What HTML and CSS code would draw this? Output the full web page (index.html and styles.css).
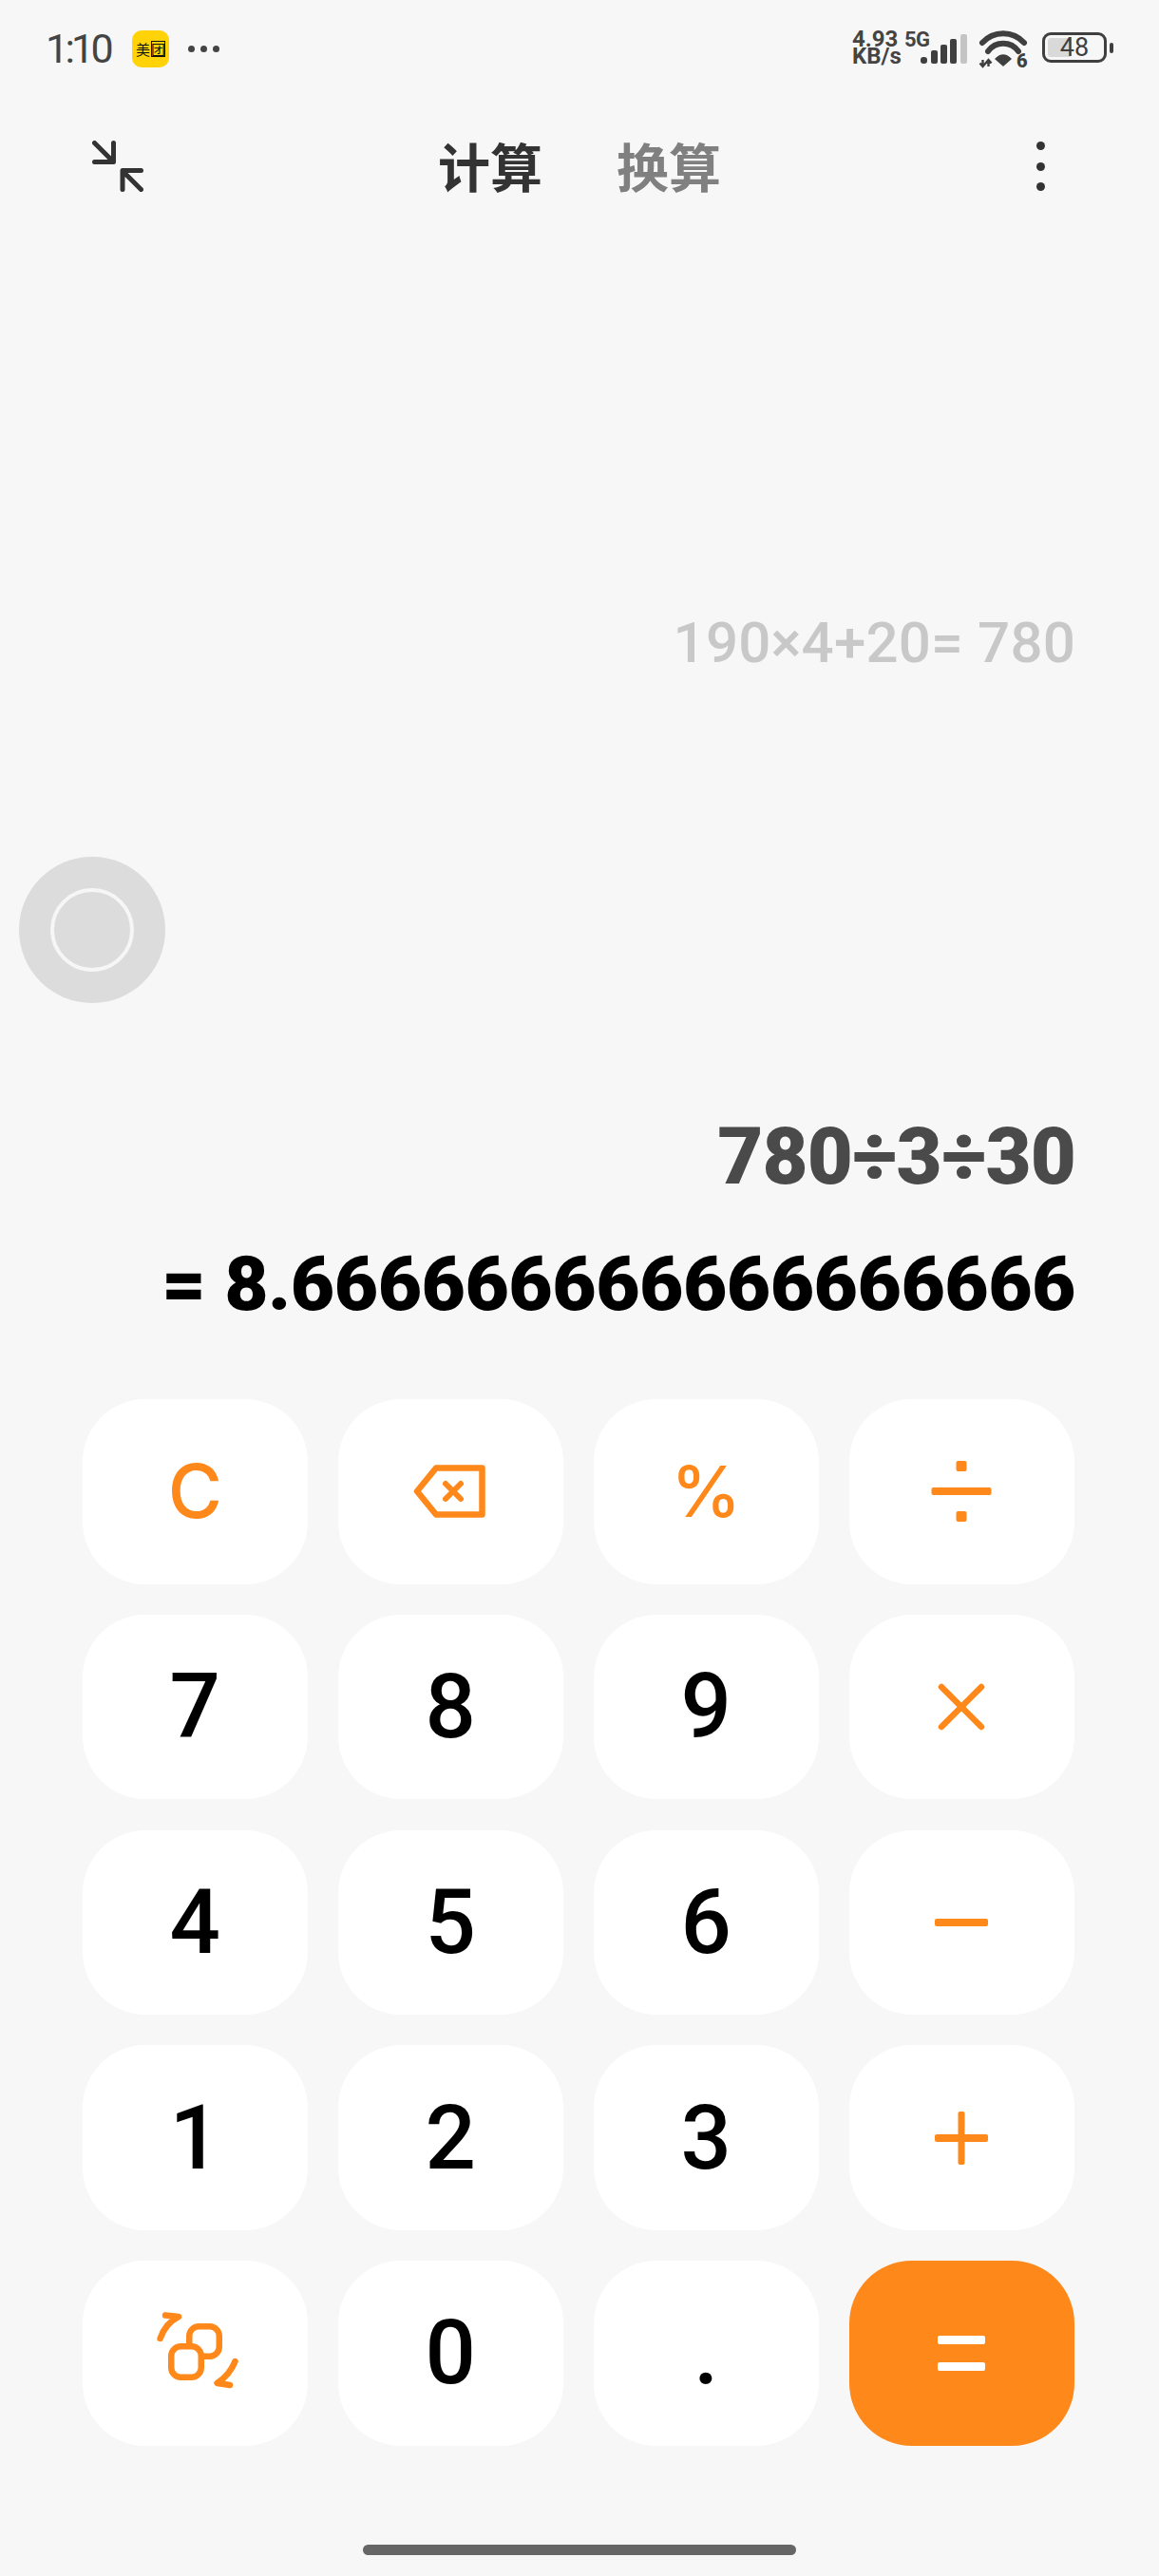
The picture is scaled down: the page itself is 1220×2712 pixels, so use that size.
FILE: index.html
```html
<!DOCTYPE html>
<html lang="zh">
<head>
<meta charset="utf-8">
<title>计算器</title>
<link rel="stylesheet" href="styles.css">
</head>
<body>
<div class="screen">
  <header class="status">
    <span class="time">1:10</span>
    <span class="app-badge"><span>美</span><span class="boxed">团</span></span>
    <span class="more-dots"><i></i><i></i><i></i></span>
    <span class="net-speed"><span>4.93</span><span>KB/s</span></span>
    <span class="net-type">5G</span>
    <svg class="signal" viewBox="0 0 50 32" aria-hidden="true">
      <rect x="0" y="24" width="7" height="7" rx="3" fill="#3f3f3f"/>
      <rect x="11" y="17" width="7" height="14" rx="2" fill="#3f3f3f"/>
      <rect x="21" y="11" width="7" height="20" rx="2" fill="#3f3f3f"/>
      <rect x="31" y="5" width="7" height="26" rx="2" fill="#3f3f3f"/>
      <rect x="42" y="0" width="7" height="31" rx="2" fill="#c4c4c4"/>
    </svg>
    <span class="wifi">
      <svg viewBox="0 0 52 40" aria-hidden="true">
        <path d="M4 13C16 0 36 0 48 13" fill="none" stroke="#3f3f3f" stroke-width="6" stroke-linecap="round"/>
        <path d="M10 22C18 11 34 11 42 22" fill="none" stroke="#3f3f3f" stroke-width="6" stroke-linecap="round"/>
        <path d="M18 30Q26 22 34 30L26 37Z" fill="#3f3f3f" stroke="#3f3f3f" stroke-width="1.5" stroke-linejoin="round"/>
        <path d="M4.5 31V38M1.5 34.5L4.5 38L7.5 34.5M10.5 38V31M7.5 34.5L10.5 31L13.5 34.5" fill="none" stroke="#3f3f3f" stroke-width="2.4"/>
      </svg>
      <b>6</b>
    </span>
    <span class="battery"><span class="battery-fill"></span><span class="battery-num">48</span></span>
    <span class="battery-nub"></span>
  </header>

  <nav class="appbar">
    <svg class="collapse" viewBox="0 0 54 54" aria-hidden="true">
      <path d="M2.5 2.500L21 21M22.500 2.500V22.500H2.500M51.500 51.500L33 33M32 51.500V31.500H51.500" fill="none" stroke="#333" stroke-width="5" stroke-linecap="round" stroke-linejoin="round"/>
    </svg>
    <div class="tabs"><span class="tab active">计算</span><span class="tab">换算</span></div>
    <span class="kebab"><i></i><i></i><i></i></span>
  </nav>

  <section class="display">
    <div class="history">190×4+20= 780</div>
    <div class="expr">780÷3÷30</div>
    <div class="result">= 8.666666666666666666</div>
  </section>

  <section class="keypad">
    <button class="key op-text c-key">C</button>
    <button class="key" aria-label="退格">
      <svg class="icon" viewBox="0 0 90 90"><path d="M30 20.5H78.5V69.5H30L10 45Z" fill="none" stroke="#ff881a" stroke-width="6.5" stroke-linejoin="round"/><path d="M40 37L56 53M56 37L40 53" stroke="#ff881a" stroke-width="6" stroke-linecap="round"/></svg>
    </button>
    <button class="key op-text pct-key">%</button>
    <button class="key" aria-label="÷">
      <svg class="icon" viewBox="0 0 90 90"><rect x="13.5" y="41" width="63" height="8" rx="2" fill="#ff881a"/><rect x="39.5" y="13" width="11" height="11" rx="2" fill="#ff881a"/><rect x="39.5" y="66" width="11" height="11" rx="2" fill="#ff881a"/></svg>
    </button>

    <button class="key">7</button>
    <button class="key">8</button>
    <button class="key">9</button>
    <button class="key" aria-label="×">
      <svg class="icon" viewBox="0 0 90 90"><path d="M24 24L66 66M66 24L24 66" stroke="#ff881a" stroke-width="6.5" stroke-linecap="round"/></svg>
    </button>

    <button class="key">4</button>
    <button class="key">5</button>
    <button class="key">6</button>
    <button class="key" aria-label="−">
      <svg class="icon" viewBox="0 0 90 90"><rect x="17" y="41" width="56" height="8" rx="2" fill="#ff881a"/></svg>
    </button>

    <button class="key">1</button>
    <button class="key">2</button>
    <button class="key">3</button>
    <button class="key" aria-label="+">
      <svg class="icon" viewBox="0 0 90 90"><rect x="17" y="41" width="56" height="8" rx="2" fill="#ff881a"/><rect x="41.5" y="17" width="7" height="56" rx="2" fill="#ff881a"/></svg>
    </button>

    <button class="key" aria-label="科学计算">
      <svg class="icon" viewBox="0 0 90 90">
        <rect x="39.25" y="17.25" width="31.5" height="31.5" rx="10" fill="none" stroke="#ff881a" stroke-width="6.5"/>
        <rect x="20.25" y="38.25" width="31.5" height="32.5" rx="10" fill="#fff" stroke="#ff881a" stroke-width="6.5"/>
        <path d="M8.6 30Q14 14 28 7L14 5.5" fill="none" stroke="#ff881a" stroke-width="6.5" stroke-linecap="round" stroke-linejoin="round"/>
        <path d="M87.5 54Q82 68 68.6 77L82 79" fill="none" stroke="#ff881a" stroke-width="6.5" stroke-linecap="round" stroke-linejoin="round"/>
      </svg>
    </button>
    <button class="key">0</button>
    <button class="key">.</button>
    <button class="key equals" aria-label="=">
      <svg class="icon" viewBox="0 0 90 90"><rect x="20" y="27" width="50" height="9" rx="2" fill="#fff"/><rect x="20" y="55" width="50" height="9" rx="2" fill="#fff"/></svg>
    </button>
  </section>

  <div class="home-bar"></div>

  <div class="float-ball"><span class="float-ring"></span></div>
</div>
</body>
</html>
```

FILE: styles.css
```css
* { box-sizing: border-box; }
html, body { margin: 0; padding: 0; }
body { background: #f7f7f7; font-family: Roboto, "Noto Sans CJK SC", sans-serif; }
.screen { position: relative; width: 1220px; height: 2712px; overflow: hidden; display: flex; flex-direction: column; background: #f7f7f7; }

/* status bar */
.status { height: 100px; display: flex; align-items: flex-start; padding: 32px 0 0 48px; color: #444; }
.time { font-size: 43px; line-height: 38px; width: 91px; letter-spacing: -3.75px; }
.app-badge { width: 39px; height: 39px; border-radius: 10px; background: #ffd308; display: flex; align-items: center; justify-content: center; gap: 1px; font-size: 15px; line-height: 17px; color: #111; font-family: "Noto Sans CJK SC", sans-serif; }
.boxed { outline: 1px solid #111; outline-offset: -1px; }
.more-dots { display: flex; gap: 6px; margin: 16px 0 0 20px; width: 699px; }
.more-dots i { width: 7px; height: 7px; border-radius: 50%; background: #444; }
.net-speed { display: flex; flex-direction: column; font-weight: 700; font-size: 24px; line-height: 18px; width: 55px; color: #444; }
.net-type { font-weight: 700; font-size: 22px; line-height: 20px; width: 17px; color: #444; letter-spacing: -.5px; white-space: nowrap; }
.signal { width: 50px; height: 32px; margin: 4px 0 0 0; }
.wifi { position: relative; width: 52px; height: 40px; margin-left: 11px; }
.wifi svg { width: 52px; height: 40px; display: block; overflow: visible; }
.wifi b { position: absolute; left: 40px; top: 24px; font-size: 20px; line-height: 16px; color: #3f3f3f; font-weight: 900; }
.battery { position: relative; width: 68px; height: 32px; margin: 2px 0 0 15px; border: 3.5px solid #3f3f3f; border-radius: 9px; display: flex; align-items: center; justify-content: center; }
.battery-fill { position: absolute; left: 3px; top: 3px; bottom: 3px; width: 25px; background: #d9d9d9; border-radius: 3px; }
.battery-num { position: relative; font-size: 27px; line-height: 25px; color: #3f3f3f; }
.battery-nub { width: 4px; height: 11px; background: #3f3f3f; border-radius: 2px; margin: 13px 0 0 3px; }

/* app bar */
.appbar { height: 150px; display: flex; align-items: center; padding: 0 120px 0 97px; }
.collapse { width: 54px; height: 54px; display: block; }
.tabs { display: flex; gap: 78px; margin-left: 310px; margin-top: -5px; font-family: "Noto Sans CJK SC", sans-serif; font-weight: 700; font-size: 55px; line-height: 60px; color: #808080; }
.tab.active { color: #333; }
.kebab { margin-left: auto; display: flex; flex-direction: column; gap: 12.5px; }
.kebab i { width: 9px; height: 9px; border-radius: 50%; background: #333; }

/* display */
.display { height: 1223px; display: flex; flex-direction: column; align-items: flex-end; padding-right: 88px; white-space: nowrap; }
.history { margin-top: 392px; font-size: 60px; line-height: 70px; font-weight: 500; color: #c8c8c8; letter-spacing: .2px; }
.expr { margin-top: 461px; font-size: 83px; line-height: 90px; font-weight: 900; letter-spacing: -.8px; color: #4a4a4a; }
.result { margin-top: 44px; font-size: 80px; line-height: 90px; font-weight: 900; letter-spacing: -.47px; color: #000; }

/* keypad */
.keypad { display: grid; grid-template-columns: repeat(4, 236.5px); grid-template-rows: repeat(5, 194.5px); gap: 32.25px 32.5px; padding-left: 87px; }
.key { border: 0; padding: 0; background: #fff; border-radius: 66px; font-family: Roboto, sans-serif; font-size: 94px; line-height: 1; font-weight: 500; color: #000; display: flex; align-items: center; justify-content: center; }
.op-text { color: #ff881a; font-family: Inter, sans-serif; font-weight: 500; }
.c-key { font-size: 78px; }
.pct-key { font-size: 74px; }
.equals { background: #ff881a; }
.icon { width: 90px; height: 90px; display: block; overflow: visible; }

/* home indicator */
.home-bar { width: 456px; height: 11px; margin: 104px 0 0 382px; background: #666; border-radius: 6px; }

/* overlay assistant ball */
.float-ball { position: absolute; left: 20px; top: 902px; width: 154px; height: 154px; border-radius: 50%; background: #dcdcdc; display: flex; align-items: center; justify-content: center; }
.float-ring { width: 88px; height: 88px; border-radius: 50%; border: 4px solid #f6f6f6; }
```
